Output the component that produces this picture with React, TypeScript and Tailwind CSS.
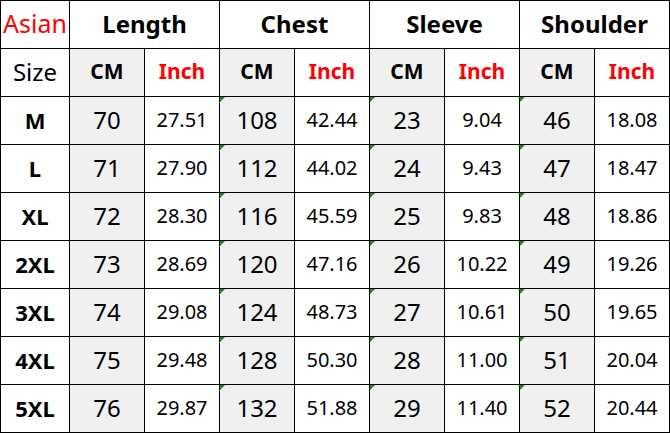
import React from "react";

const rows = [
  ["M", "70", "27.51", "108", "42.44", "23", "9.04", "46", "18.08"],
  ["L", "71", "27.90", "112", "44.02", "24", "9.43", "47", "18.47"],
  ["XL", "72", "28.30", "116", "45.59", "25", "9.83", "48", "18.86"],
  ["2XL", "73", "28.69", "120", "47.16", "26", "10.22", "49", "19.26"],
  ["3XL", "74", "29.08", "124", "48.73", "27", "10.61", "50", "19.65"],
  ["4XL", "75", "29.48", "128", "50.30", "28", "11.00", "51", "20.04"],
  ["5XL", "76", "29.87", "132", "51.88", "29", "11.40", "52", "20.44"],
];

const cell = "relative flex items-center justify-center border-r border-b border-black h-[48px]";

function Tri() {
  return (
    <span className="absolute left-0 top-0 w-0 h-0 border-t-[5px] border-r-[5px] border-t-[#1f8a1f] border-r-transparent" />
  );
}

export default function App() {
  return (
    <div
      className="w-[670px] h-[433px] bg-white text-black"
      style={{ fontFamily: '"Noto Sans", "Open Sans", sans-serif' }}
    >
      <div className="grid grid-cols-[69px_repeat(8,75px)] border-l border-t border-black w-[670px]">
        <div className={`${cell} pb-[2px] text-[25px] text-[#ff0000]`}>Asian</div>
        <div className={`${cell} pb-[2px] col-span-2 text-[24px] font-bold`}>Length</div>
        <div className={`${cell} pb-[2px] col-span-2 text-[24px] font-bold`}>Chest</div>
        <div className={`${cell} pb-[2px] col-span-2 text-[24px] font-bold`}>Sleeve</div>
        <div className={`${cell} pb-[2px] col-span-2 text-[24px] font-bold`}>Shoulder</div>

        <div className={`${cell} pb-[1px] text-[24px]`}>Size</div>
        {[0, 1, 2, 3].map((i) => (
          <React.Fragment key={i}>
            <div className={`${cell} pb-[1px] bg-[#f0f0f0] text-[21px] font-bold`}>CM</div>
            <div className={`${cell} pb-[1px] text-[21px] font-bold text-[#ff0000]`}>Inch</div>
          </React.Fragment>
        ))}

        {rows.map((r) => (
          <React.Fragment key={r[0]}>
            <div className={`${cell} pb-[1px] text-[22px] font-bold`}>{r[0]}</div>
            {r.slice(1).map((v, j) => {
              const isCm = j % 2 === 0;
              return (
                <div
                  key={j}
                  className={`${cell} pb-[1px] ${isCm ? "bg-[#f0f0f0] text-[24px]" : "text-[20px]"}`}
                >
                  {isCm && j > 0 && <Tri />}
                  {v}
                </div>
              );
            })}
          </React.Fragment>
        ))}
      </div>
    </div>
  );
}
